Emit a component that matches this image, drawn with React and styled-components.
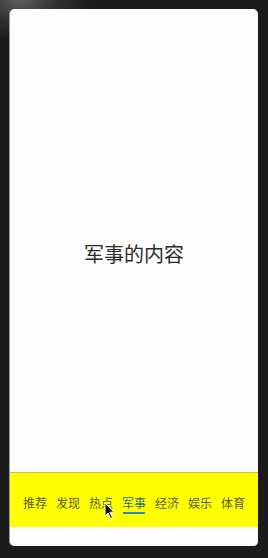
import React from "react";
import styled, { createGlobalStyle } from "styled-components";

const Global = createGlobalStyle`
  html, body { margin: 0; padding: 0; background: #1b1b1b; }
  body { font-family: "Noto Sans CJK SC", "Noto Sans", sans-serif; }
`;

const Frame = styled.div`
  position: relative;
  width: 268px;
  height: 558px;
  box-sizing: border-box;
  padding: 9px 10px 12px 10px;
  background:
    radial-gradient(ellipse 70px 40px at 20px 0px, #5e5e5e 0px, #333 35px, rgba(27,27,27,0) 70px),
    #1b1b1b;
  display: flex;
  overflow: hidden;
`;

const Screen = styled.div`
  flex: 1;
  display: flex;
  flex-direction: column;
  background: #fdfdfd;
  border-radius: 5px;
  overflow: hidden;
  box-shadow: -1px 0 0 #9a9a9a;
`;

const Content = styled.div`
  flex: 1;
  display: flex;
  align-items: center;
  justify-content: center;
  padding-top: 26px;
  font-size: 20px;
  color: #2b2b2b;
`;

const TabBar = styled.div`
  height: 55px;
  border-top: 1px solid #d2bb6a;
  background: #ffff00;
  display: flex;
  align-items: center;
  justify-content: center;
  gap: 9px;
  padding-top: 8px;
  box-sizing: border-box;
`;

const Tab = styled.div`
  display: flex;
  flex-direction: column;
  align-items: center;
  font-size: 12px;
  line-height: 16px;
  color: ${(p) => (p.$active ? "#2d6f7a" : "#5c5c2a")};
  &::after {
    content: "";
    display: block;
    width: 22px;
    height: 2px;
    margin-top: 1px;
    background: ${(p) => (p.$active ? "#2f86c8" : "transparent")};
  }
`;

const Footer = styled.div`
  height: 19px;
  background: #fdfdfd;
`;

const Cursor = styled.svg`
  position: absolute;
  left: 104px;
  top: 502px;
  width: 12px;
  height: 18px;
`;

const tabs = ["推荐", "发现", "热点", "军事", "经济", "娱乐", "体育"];

export default function App() {
  return (
    <>
      <Global />
      <Frame>
        <Screen>
          <Content>军事的内容</Content>
          <TabBar>
            {tabs.map((t) => (
              <Tab key={t} $active={t === "军事"}>{t}</Tab>
            ))}
          </TabBar>
          <Footer />
        </Screen>
        <Cursor viewBox="0 0 12 18">
          <path d="M1 1 L1 14 L4 11 L6.5 16.5 L8.5 15.6 L6 10.2 L10 10.2 Z" fill="#111" stroke="#fff" strokeWidth="1" strokeLinejoin="round" />
        </Cursor>
      </Frame>
    </>
  );
}
